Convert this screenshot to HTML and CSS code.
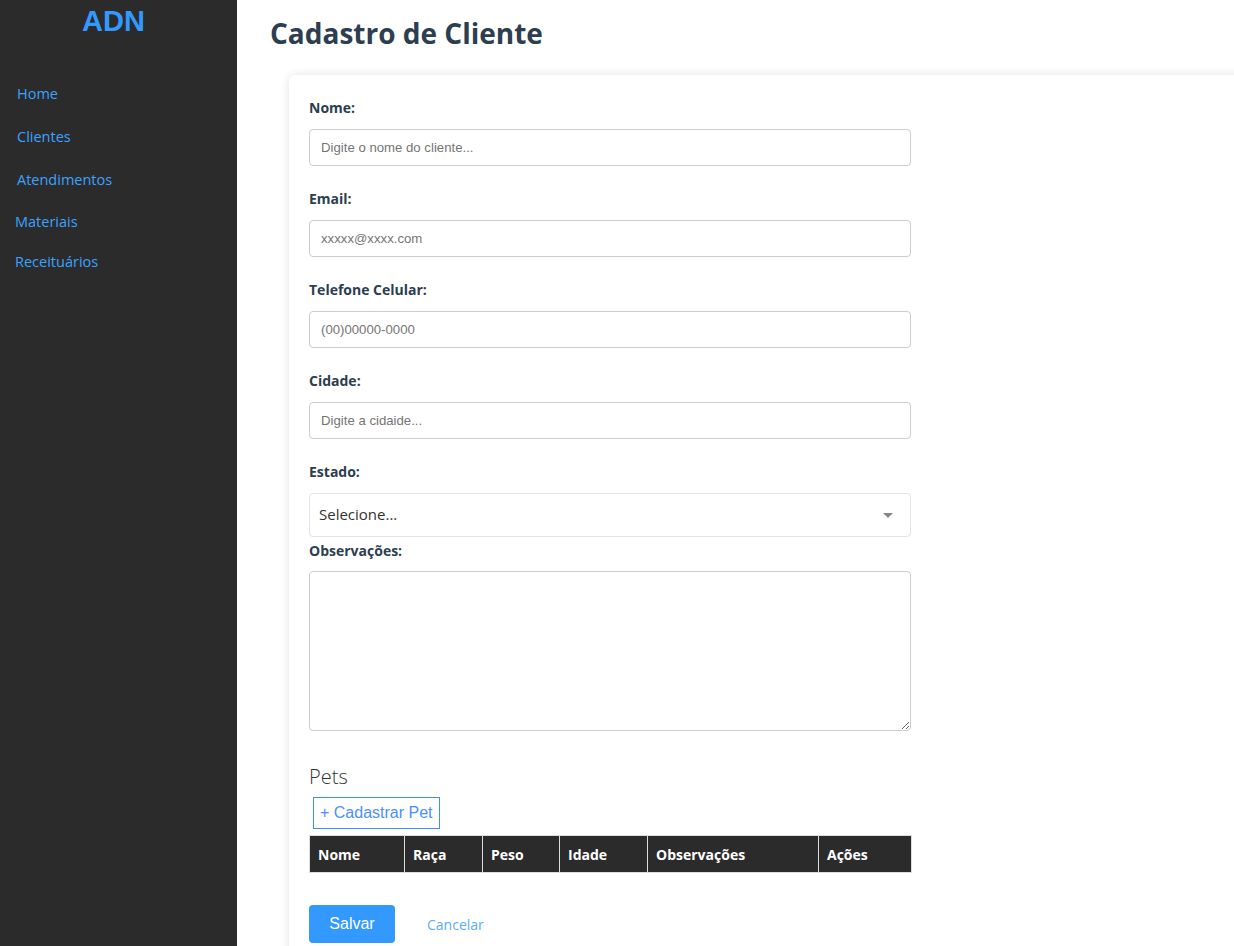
FILE: index.html
```html
<!DOCTYPE html>
<html lang="pt-BR">
<head>
<meta charset="utf-8">
<title>Cadastro de Cliente</title>
<link rel="stylesheet" href="styles.css">
</head>
<body>
<div class="app">
  <aside class="sidebar">
    <div class="logo">ADN</div>
    <nav class="nav">
      <a class="nav-link" href="#">Home</a>
      <a class="nav-link" href="#">Clientes</a>
      <a class="nav-link nav-link--short" href="#">Atendimentos</a>
      <a class="nav-link nav-link--alt" href="#">Materiais</a>
      <a class="nav-link nav-link--alt" href="#">Receituários</a>
    </nav>
  </aside>
  <main class="content">
    <h1 class="page-title">Cadastro de Cliente</h1>
    <section class="card">
      <form class="form">
        <div class="field">
          <label class="label">Nome:</label>
          <input class="input" type="text" placeholder="Digite o nome do cliente...">
        </div>
        <div class="field">
          <label class="label">Email:</label>
          <input class="input" type="text" placeholder="xxxxx@xxxx.com">
        </div>
        <div class="field">
          <label class="label">Telefone Celular:</label>
          <input class="input" type="text" placeholder="(00)00000-0000">
        </div>
        <div class="field">
          <label class="label">Cidade:</label>
          <input class="input" type="text" placeholder="Digite a cidaide...">
        </div>
        <div class="field field--select">
          <label class="label">Estado:</label>
          <div class="select">
            <span class="select-value">Selecione...</span>
            <span class="select-arrow"></span>
          </div>
        </div>
        <div class="field field--textarea">
          <label class="label label--tight">Observações:</label>
          <textarea class="textarea"></textarea>
        </div>
        <div class="pets">
          <h2 class="pets-title">Pets</h2>
          <button type="button" class="btn-outline">+ Cadastrar Pet</button>
          <table class="table">
            <thead>
              <tr>
                <th class="col-nome">Nome</th>
                <th class="col-raca">Raça</th>
                <th class="col-peso">Peso</th>
                <th class="col-idade">Idade</th>
                <th class="col-obs">Observações</th>
                <th class="col-acoes">Ações</th>
              </tr>
            </thead>
          </table>
        </div>
        <div class="actions">
          <button type="button" class="btn-primary">Salvar</button>
          <a class="btn-link" href="#">Cancelar</a>
        </div>
      </form>
    </section>
  </main>
</div>
</body>
</html>
```
FILE: styles.css
```css
* { box-sizing: border-box; }
html, body { margin: 0; padding: 0; }
body {
  background: #ffffff;
  font-family: "Open Sans", "Noto Sans", sans-serif;
  color: #2c3e50;
}
.app {
  display: flex;
  height: 946px;
  overflow: hidden;
}
.sidebar {
  width: 237px;
  flex: 0 0 237px;
  background: #2b2b2b;
}
.logo {
  font-family: "Liberation Sans", Arial, sans-serif;
  font-weight: bold;
  font-size: 29px;
  line-height: 34px;
  color: #3399ff;
  text-align: center;
  padding: 4px 10px 0 0;
}
.nav {
  display: flex;
  flex-direction: column;
  padding-top: 46px;
}
.nav-link {
  display: block;
  font-size: 14.5px;
  line-height: 20px;
  height: 43px;
  color: #3ba3ff;
  text-decoration: none;
  padding-left: 17px;
}
.nav-link--short { height: 42px; }
.nav-link--alt { padding-left: 15px; height: 40px; }
.content {
  flex: 1;
  padding-left: 33px;
  overflow: hidden;
}
.page-title {
  margin: 0;
  padding-top: 14px;
  font-size: 28px;
  line-height: 38px;
  font-weight: 700;
  color: #2c3e50;
}
.card {
  margin-top: 23px;
  margin-left: 19px;
  margin-right: -12px;
  background: #fff;
  border-radius: 6px;
  box-shadow: 0 0 10px rgba(0,0,0,0.12);
  padding: 23px 20px 40px;
  min-height: 900px;
}
.form { width: 602px; }
.field { margin-bottom: 23px; }
.label {
  display: block;
  font-size: 14px;
  line-height: 19px;
  font-weight: 700;
  color: #2c3e50;
  margin-bottom: 12px;
}
.label--tight { margin-bottom: 11px; }
.input {
  display: block;
  width: 602px;
  height: 37px;
  border: 1px solid #cccccc;
  border-radius: 4px;
  padding: 0 11px;
  font-family: "Liberation Sans", Arial, sans-serif;
  font-size: 13.2px;
  color: #333;
  outline: none;
}
.input::placeholder { color: #757575; }
.field--select { margin-bottom: 4px; }
.select {
  display: flex;
  align-items: center;
  justify-content: space-between;
  height: 44px;
  border: 1px solid #e3e3e3;
  border-radius: 4px;
  padding: 0 17px 2px 9px;
}
.select-value {
  font-size: 15px;
  color: #333;
}
.select-arrow {
  width: 0;
  height: 0;
  margin-top: 2px;
  border-left: 5px solid transparent;
  border-right: 5px solid transparent;
  border-top: 5px solid #888;
}
.field--textarea { margin-bottom: 32px; }
.textarea {
  display: block;
  width: 602px;
  height: 160px;
  border: 1px solid #cccccc;
  border-radius: 4px;
  resize: both;
  outline: none;
}
.pets-title {
  margin: 0;
  font-size: 20px;
  line-height: 28px;
  font-weight: 300;
  color: #333;
}
.btn-outline {
  display: block;
  margin: 6px 0 6px 4px;
  height: 32px;
  padding: 0 6px;
  background: #fff;
  border: 1px solid #3b8eff;
  border-radius: 0;
  color: #4a90ff;
  font-family: "Liberation Sans", Arial, sans-serif;
  font-size: 16px;
}
.table {
  width: 602px;
  border-collapse: collapse;
  table-layout: fixed;
}
.table th {
  background: #2b2b2b;
  color: #fff;
  font-size: 14px;
  font-weight: 700;
  text-align: left;
  height: 37px;
  padding: 0 8px;
  border: 1px solid #dddddd;
}
.col-nome { width: 95px; }
.col-raca { width: 78px; }
.col-peso { width: 77px; }
.col-idade { width: 88px; }
.col-obs { width: 171px; }
.col-acoes { width: 93px; }
.actions {
  display: flex;
  align-items: center;
  gap: 32px;
  margin-top: 32px;
}
.btn-primary {
  width: 86px;
  height: 38px;
  background: #3399ff;
  color: #fff;
  border: none;
  border-radius: 4px;
  font-family: "Liberation Sans", Arial, sans-serif;
  font-size: 16px;
}
.btn-link {
  font-size: 14px;
  color: #5aacff;
  text-decoration: none;
}
```
